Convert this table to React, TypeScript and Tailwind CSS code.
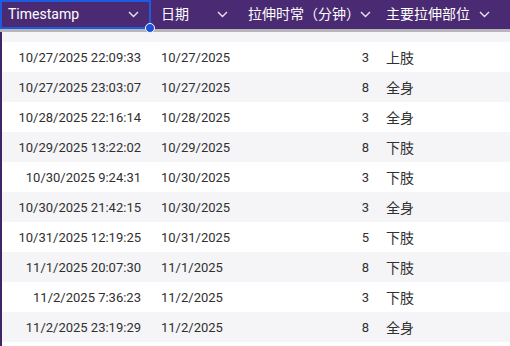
import React from "react";

const rows = [
  { ts: "10/26/2025 21:40:12", date: "10/26/2025", min: 5, part: "全身" },
  { ts: "10/27/2025 22:09:33", date: "10/27/2025", min: 3, part: "上肢" },
  { ts: "10/27/2025 23:03:07", date: "10/27/2025", min: 8, part: "全身" },
  { ts: "10/28/2025 22:16:14", date: "10/28/2025", min: 3, part: "全身" },
  { ts: "10/29/2025 13:22:02", date: "10/29/2025", min: 8, part: "下肢" },
  { ts: "10/30/2025 9:24:31", date: "10/30/2025", min: 3, part: "下肢" },
  { ts: "10/30/2025 21:42:15", date: "10/30/2025", min: 3, part: "全身" },
  { ts: "10/31/2025 12:19:25", date: "10/31/2025", min: 5, part: "下肢" },
  { ts: "11/1/2025 20:07:30", date: "11/1/2025", min: 8, part: "下肢" },
  { ts: "11/2/2025 7:36:23", date: "11/2/2025", min: 3, part: "下肢" },
  { ts: "11/2/2025 23:19:29", date: "11/2/2025", min: 8, part: "全身" },
  { ts: "11/3/2025 22:01:48", date: "11/3/2025", min: 5, part: "上肢" },
];

function Chevron() {
  return (
    <svg width="11" height="7" viewBox="0 0 11 7" fill="none" className="shrink-0">
      <path d="M1 1l4.5 4.5L10 1" stroke="#e9e4f1" strokeWidth="1.4" />
    </svg>
  );
}

export default function App() {
  return (
    <div
      className="relative h-[346px] w-[510px] overflow-hidden bg-white text-[#303030]"
      style={{ fontFamily: "Roboto, 'Noto Sans CJK SC', sans-serif" }}
    >
      {/* 表头 */}
      <div className="flex h-[29px] bg-[#4a2a73] text-[14px] text-white">
        <div className="relative flex w-[151px] items-center border-2 border-[#1d5be0] pl-[6px] pr-[10px]">
          <span className="flex-1">Timestamp</span>
          <Chevron />
          <span className="absolute -bottom-[6px] -right-[6px] z-10 h-[10px] w-[10px] rounded-full border border-white bg-[#1d4fd8]" />
        </div>
        <div className="flex w-[89px] items-center pl-[10px] pr-[12px]">
          <span className="flex-1">日期</span>
          <Chevron />
        </div>
        <div className="flex w-[137px] items-center pl-[8px] pr-[12px]">
          <span className="flex-1 whitespace-nowrap">拉伸时常（分钟）</span>
          <Chevron />
        </div>
        <div className="flex flex-1 items-center pl-[9px] pr-[20px]">
          <span className="flex-1">主要拉伸部位</span>
          <Chevron />
        </div>
      </div>
      <div className="h-[3px] bg-[#b7b7b9]" />

      {/* 表体：已向下滚动，首行只露出底部 */}
      <div className="h-[314px] overflow-hidden border-l-2 border-[#3f2566]">
        <div className="-mt-[20px] text-[13px]">
          {rows.map((r, i) => (
            <div
              key={r.ts}
              className={`flex h-[30px] items-center ${i === 0 ? "pb-[5px]" : "pt-[2px]"} ${i % 2 === 0 ? "bg-[#f5f5f7]" : "bg-white"}`}
            >
              <div className="w-[149px] pr-[10px] text-right">{r.ts}</div>
              <div className="w-[89px] pl-[10px]">{r.date}</div>
              <div className="w-[137px] pr-[8px] text-right">{r.min}</div>
              <div className="flex-1 pl-[9px] text-[14px]">{r.part}</div>
            </div>
          ))}
        </div>
      </div>
    </div>
  );
}
